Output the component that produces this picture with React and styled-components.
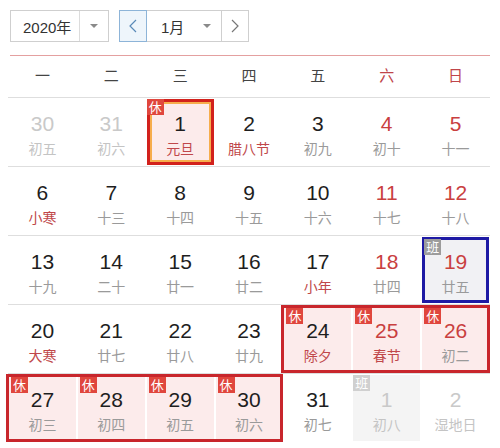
import React from "react";
import styled, { createGlobalStyle } from "styled-components";

const Global = createGlobalStyle`
  html, body { margin: 0; padding: 0; background: #fff; }
  body { font-family: "Liberation Sans", "Noto Sans CJK SC", sans-serif; }
`;

const Page = styled.div`
  width: 482px;
  height: 448px;
  padding: 10px 10px 0 8px;
  overflow: hidden;
`;

const Toolbar = styled.div`
  display: flex;
  align-items: center;
  gap: 10px;
  height: 32px;
  margin-left: 2px;
`;

const Select = styled.div`
  display: flex;
  align-items: stretch;
  height: 30px;
  width: ${(p) => p.width}px;
  border: 1px solid #cfcfcf;
  background: #fff;
  color: #333;
  font-size: 15px;
`;

const SelectText = styled.div`
  flex: 1;
  display: flex;
  align-items: center;
  padding-left: ${(p) => p.pad}px;
`;

const Caret = styled.div`
  width: 28px;
  display: flex;
  align-items: center;
  justify-content: center;
  border-left: ${(p) => (p.divider ? "1px solid #dcdcdc" : "none")};
  &::after {
    content: "";
    border-left: 4px solid transparent;
    border-right: 4px solid transparent;
    border-top: 4px solid #8a8a8a;
  }
`;

const MonthGroup = styled.div`
  display: flex;
  height: 32px;
`;

const StepButton = styled.div`
  width: 26px;
  height: 30px;
  display: flex;
  align-items: center;
  justify-content: center;
  border: 1px solid ${(p) => (p.active ? "#8db4d8" : "#cfcfcf")};
  background: ${(p) => (p.active ? "#eef5fb" : "#fff")};
  color: ${(p) => (p.active ? "#5a8ab8" : "#777")};
`;

const MonthSelect = styled(Select)`
  border-left: none;
  border-right: none;
`;

const RedRule = styled.div`
  height: 1px;
  background: #e4a0a0;
  margin-top: 13px;
  margin-left: 2px;
`;

const WeekHead = styled.div`
  display: grid;
  grid-template-columns: repeat(7, 1fr);
  height: 41px;
  padding-bottom: 4px;
  box-sizing: border-box;
  align-items: center;
  font-family: "Noto Sans CJK SC", sans-serif;
  font-size: 15px;
`;

const WeekName = styled.div`
  text-align: center;
  color: ${(p) => (p.weekend ? "#c0454a" : "#444")};
`;

const Week = styled.div`
  display: grid;
  grid-template-columns: repeat(7, 1fr);
  height: 68px;
  border-top: 1px solid #dedede;
`;

const Cell = styled.div`
  position: relative;
  display: flex;
  flex-direction: column;
  align-items: center;
  padding-top: 13px;
  border: 1px solid #fff;
  background: ${(p) => p.bg || "#fff"};
  box-shadow: ${(p) => p.ring || "none"};

  &::after {
    content: "";
    display: ${(p) => (p.frame ? "block" : "none")};
    position: absolute;
    top: -1px;
    bottom: -1px;
    left: ${(p) => (p.start ? "-3px" : "-1px")};
    right: -1px;
    border-style: solid;
    border-color: ${(p) => p.frame};
    border-width: 3px ${(p) => (p.end ? 3 : 0)}px 3px ${(p) => (p.start ? 3 : 0)}px;
    pointer-events: none;
  }
`;

const Num = styled.div`
  font-size: 21px;
  line-height: 24px;
  color: ${(p) => p.color};
`;

const Lunar = styled.div`
  margin-top: 2px;
  font-family: "Noto Sans CJK SC", sans-serif;
  font-size: 14px;
  line-height: 20px;
  color: ${(p) => p.color};
`;

const Badge = styled.div`
  position: absolute;
  top: ${(p) => p.off}px;
  left: ${(p) => p.off}px;
  width: 17px;
  height: 16px;
  background: ${(p) => p.bg};
  color: #fff;
  font-family: "Noto Sans CJK SC", sans-serif;
  font-size: 13px;
  line-height: 16px;
  text-align: center;
  z-index: 1;
`;

const C = {
  ink: "#1e1e1e",
  red: "#c9403f",
  fade: "#c9c9c9",
  lunar: "#9a9a9a",
  fest: "#c0474a",
  pink: "#fcebeb",
};

// t: 0 weekday, 1 weekend, 2 other month; f: festival / solar term
const weeks = [
  [
    { d: 30, l: "初五", t: 2 },
    { d: 31, l: "初六", t: 2 },
    { d: 1, l: "元旦", f: 1, rest: 1, today: 1 },
    { d: 2, l: "腊八节", f: 1 },
    { d: 3, l: "初九" },
    { d: 4, l: "初十", t: 1 },
    { d: 5, l: "十一", t: 1 },
  ],
  [
    { d: 6, l: "小寒", f: 1 },
    { d: 7, l: "十三" },
    { d: 8, l: "十四" },
    { d: 9, l: "十五" },
    { d: 10, l: "十六" },
    { d: 11, l: "十七", t: 1 },
    { d: 12, l: "十八", t: 1 },
  ],
  [
    { d: 13, l: "十九" },
    { d: 14, l: "二十" },
    { d: 15, l: "廿一" },
    { d: 16, l: "廿二" },
    { d: 17, l: "小年", f: 1 },
    { d: 18, l: "廿四", t: 1 },
    { d: 19, l: "廿五", t: 1, work: 1, blue: 1 },
  ],
  [
    { d: 20, l: "大寒", f: 1 },
    { d: 21, l: "廿七" },
    { d: 22, l: "廿八" },
    { d: 23, l: "廿九" },
    { d: 24, l: "除夕", f: 1, rest: 1, start: 1 },
    { d: 25, l: "春节", f: 1, t: 1, rest: 1 },
    { d: 26, l: "初二", t: 1, rest: 1, end: 1 },
  ],
  [
    { d: 27, l: "初三", rest: 1, start: 1 },
    { d: 28, l: "初四", rest: 1 },
    { d: 29, l: "初五", rest: 1 },
    { d: 30, l: "初六", rest: 1, end: 1 },
    { d: 31, l: "初七" },
    { d: 1, l: "初八", t: 2, work: 1 },
    { d: 2, l: "湿地日", t: 2 },
  ],
];

function Day({ c }) {
  const numColor = c.t === 2 ? C.fade : c.t === 1 ? C.red : C.ink;
  const lunarColor = c.t === 2 ? "#c4c4c4" : c.f ? C.fest : C.lunar;
  let bg = "#fff";
  if (c.rest) bg = C.pink;
  if (c.blue) bg = "#f1f1f4";
  if (c.work && c.t === 2) bg = "#f4f4f4";

  let ring = "none";
  let frame = null;
  if (c.today) ring = "inset 0 0 0 3px #d2211c, inset 0 0 0 5px #f6ad4c";
  else if (c.blue) ring = "inset 0 0 0 3px #1e1aa4";
  else if (c.rest) frame = "#c8262c";

  return (
    <Cell bg={bg} ring={ring} frame={frame} start={c.start} end={c.end}>
      {c.rest && <Badge bg="#e0463d" off={c.today ? 0 : 2}>休</Badge>}
      {c.work && (
        <Badge bg={c.t === 2 ? "#d0d0d0" : "#9c9c9c"} off={c.blue ? 2 : 0}>
          班
        </Badge>
      )}
      <Num color={numColor}>{c.d}</Num>
      <Lunar color={lunarColor}>{c.l}</Lunar>
    </Cell>
  );
}

const Chevron = ({ dir }) => (
  <svg width="8" height="14" viewBox="0 0 8 14">
    <path
      d={dir === "left" ? "M7 1 L1 7 L7 13" : "M1 1 L7 7 L1 13"}
      fill="none"
      stroke="currentColor"
      strokeWidth="1.2"
    />
  </svg>
);

export default function App() {
  const names = ["一", "二", "三", "四", "五", "六", "日"];
  return (
    <Page>
      <Global />
      <Toolbar>
        <Select width={97}>
          <SelectText pad={12}>2020年</SelectText>
          <Caret divider />
        </Select>
        <MonthGroup>
          <StepButton active>
            <Chevron dir="left" />
          </StepButton>
          <MonthSelect width={74}>
            <SelectText pad={14}>1月</SelectText>
            <Caret />
          </MonthSelect>
          <StepButton>
            <Chevron dir="right" />
          </StepButton>
        </MonthGroup>
      </Toolbar>
      <RedRule />
      <WeekHead>
        {names.map((n, i) => (
          <WeekName key={n} weekend={i > 4}>
            {n}
          </WeekName>
        ))}
      </WeekHead>
      {weeks.map((w, i) => (
        <Week key={i}>
          {w.map((c, j) => (
            <Day key={j} c={c} />
          ))}
        </Week>
      ))}
    </Page>
  );
}
